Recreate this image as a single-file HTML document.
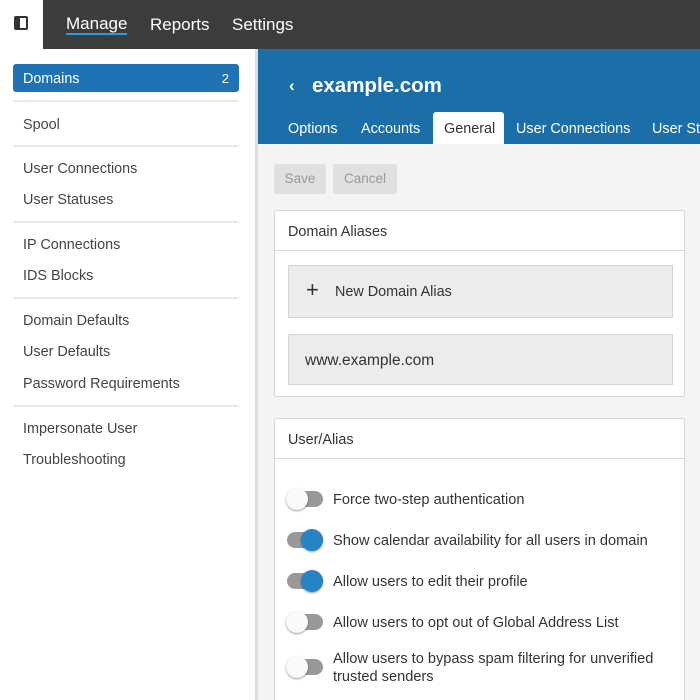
<!DOCTYPE html>
<html><head><style>
*{box-sizing:border-box;margin:0;padding:0}
html,body{width:700px;height:700px;overflow:hidden}
body{font-family:"Liberation Sans",sans-serif;background:#f4f4f4;position:relative;color:#333;white-space:nowrap}
.top{position:absolute;left:0;top:0;width:700px;height:49px;background:#3c3c3c}
.ic{position:absolute;left:0;top:0;width:43px;height:49px;background:#fff}
.ic div{position:absolute;left:14px;top:16px;width:14px;height:14px;border:2px solid #333;border-radius:2px}
.ic div:after{content:"";position:absolute;left:0;top:0;width:4px;height:10px;background:#333}
.nav{position:absolute;top:15px;color:#fff;font-size:17px}
.side{position:absolute;left:0;top:49px;width:258px;height:651px;background:#fff;border-right:3px solid #ddd}
.dom{position:absolute;left:13px;top:15px;width:226px;height:28px;background:#1f73b4;border-radius:3px;color:#fff;font-size:14.3px;padding:7px 10px 0}
.dom span{float:right;font-size:13px}
.si{position:absolute;left:23px;font-size:14.4px;color:#444;margin-top:1px}
.sep{position:absolute;left:13px;width:226px;height:2px;background:#e8e8e8}
.hdr{position:absolute;left:258px;top:49px;width:442px;height:95px;background:#1b6ea8}
.title{position:absolute;left:312px;top:74px;color:#fff;font-size:20.5px;font-weight:bold}
.back{position:absolute;left:289px;top:76px;color:#fff;font-size:17px;font-weight:bold}
.tab{position:absolute;top:121px;color:#fff;font-size:14.4px}
.gen{position:absolute;left:433px;top:112px;width:71px;height:32px;background:#fff;border-radius:3px 3px 0 0;color:#333;font-size:14.4px;padding:9px 0 0 11px}
.btn{position:absolute;top:164px;height:30px;background:#e0e0e0;color:#999;font-size:13.5px;padding:7px 0;text-align:center;border-radius:2px}
.card{position:absolute;left:274px;width:411px;background:#fff;border:1px solid #d6d6d6;border-radius:3px}
.ch{height:40px;border-bottom:1px solid #d6d6d6;padding:13px 13px 0;font-size:14.4px;color:#333}
.item{position:absolute;left:13px;width:385px;background:#ececec;border:1px solid #d4d4d4;font-size:15.5px;color:#333}
.tg{position:absolute;left:287px;width:36px;height:16px;border-radius:8px;background:#999}
.tg i{position:absolute;top:-3px;width:22px;height:22px;border-radius:50%;background:#fafafa;box-shadow:0 1px 2px rgba(0,0,0,.4)}
.tg.on i{background:#2584c6;left:14px}
.tg.off i{left:-1px}
.tl{position:absolute;left:333px;font-size:14.6px;color:#333;line-height:18px;margin-top:1px}
</style></head><body>
<div class="top"></div>
<div class="ic"><div></div></div>
<div class="nav" style="left:66px;border-bottom:2px solid #2a9be0;line-height:18px">Manage</div>
<div class="nav" style="left:150px">Reports</div>
<div class="nav" style="left:232px">Settings</div>
<div class="side">
<div class="dom">Domains<span>2</span></div>
<div class="sep" style="top:51px"></div>
<div class="si" style="top:67px">Spool</div>
<div class="sep" style="top:96px"></div>
<div class="si" style="top:111px">User Connections</div>
<div class="si" style="top:142px">User Statuses</div>
<div class="sep" style="top:172px"></div>
<div class="si" style="top:187px">IP Connections</div>
<div class="si" style="top:218px">IDS Blocks</div>
<div class="sep" style="top:248px"></div>
<div class="si" style="top:263px">Domain Defaults</div>
<div class="si" style="top:294px">User Defaults</div>
<div class="si" style="top:326px">Password Requirements</div>
<div class="sep" style="top:356px"></div>
<div class="si" style="top:371px">Impersonate User</div>
<div class="si" style="top:402px">Troubleshooting</div>
</div>
<div class="hdr"></div>
<div class="back">&lsaquo;</div>
<div class="title">example.com</div>
<div class="tab" style="left:288px">Options</div>
<div class="tab" style="left:361px">Accounts</div>
<div class="gen">General</div>
<div class="tab" style="left:516px">User Connections</div>
<div class="tab" style="left:652px">User Sta</div>
<div class="btn" style="left:274px;width:52px">Save</div>
<div class="btn" style="left:333px;width:64px">Cancel</div>
<div class="card" style="top:210px;height:187px">
<div class="ch">Domain Aliases</div>
<div class="item" style="top:54px;height:53px;padding:18px 0 0 46px;font-size:14.4px"><span style="position:absolute;left:17px;top:11px;font-size:22px">+</span>New Domain Alias</div>
<div class="item" style="top:123px;height:51px;padding:17px 0 0 16px">www.example.com</div>
</div>
<div class="card" style="top:418px;height:290px">
<div class="ch">User/Alias</div>
</div>
<div class="tg off" style="top:491px"><i></i></div><div class="tl" style="top:490px">Force two-step authentication</div>
<div class="tg on" style="top:532px"><i></i></div><div class="tl" style="top:531px">Show calendar availability for all users in domain</div>
<div class="tg on" style="top:573px"><i></i></div><div class="tl" style="top:572px">Allow users to edit their profile</div>
<div class="tg off" style="top:614px"><i></i></div><div class="tl" style="top:613px">Allow users to opt out of Global Address List</div>
<div class="tg off" style="top:659px"><i></i></div><div class="tl" style="top:649px">Allow users to bypass spam filtering for unverified<br>trusted senders</div>
</body></html>
